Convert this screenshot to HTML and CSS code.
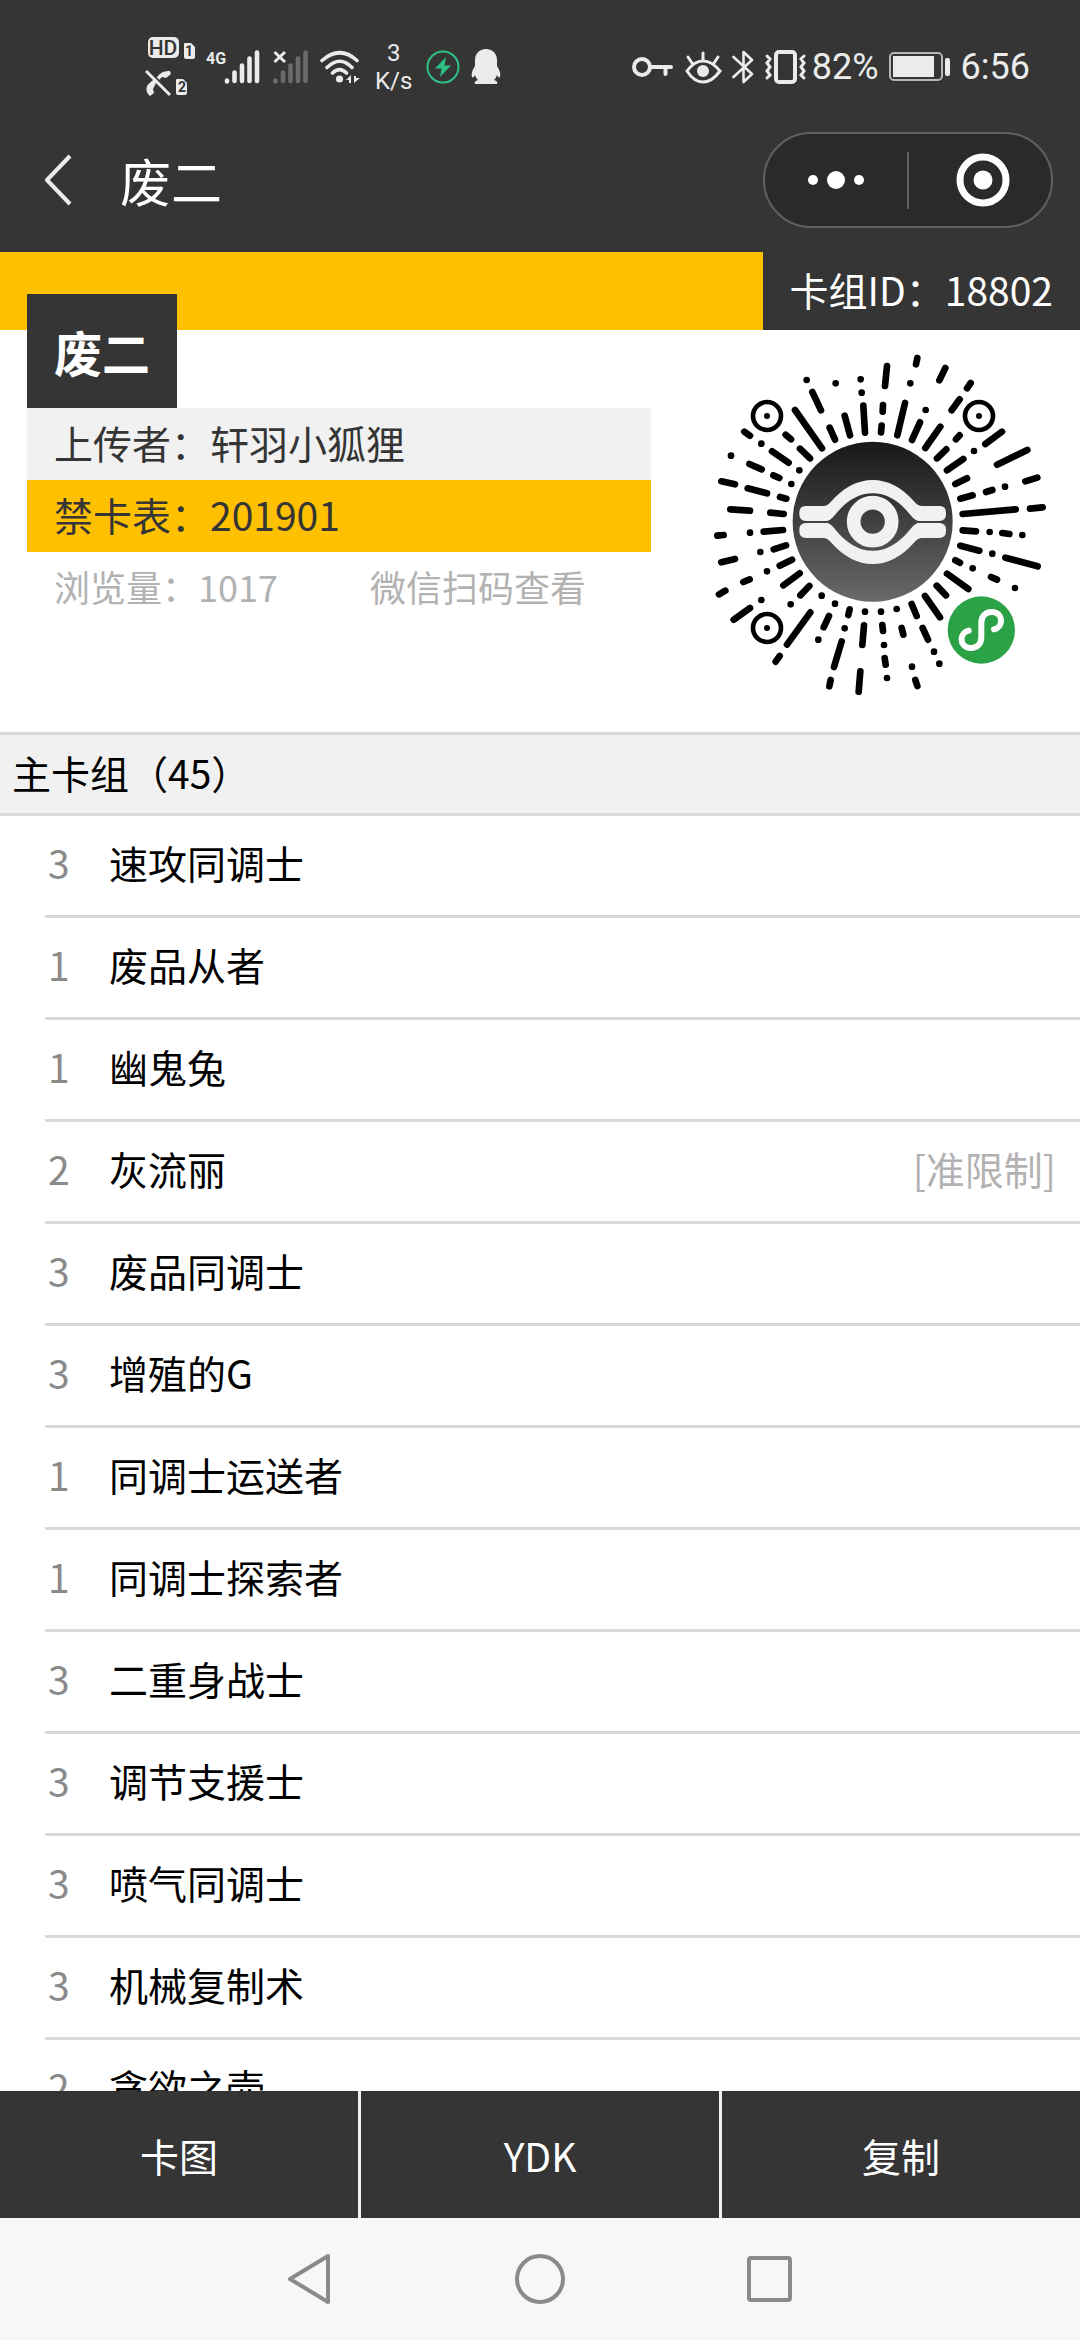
FILE: index.html
```html
<!DOCTYPE html>
<html lang="zh-CN">
<head>
    <meta charset="UTF-8">
    <meta name="viewport" content="width=device-width, initial-scale=1.0">
    <link rel="stylesheet" href="styles.css">
    <title>废二</title>
</head>
<body>
    <header class="top">
      <div class="status">
        <div class="status-left">
          <svg class="sims" width="50" height="62" viewBox="0 0 50 62">
            <rect x="3" y="1" width="31" height="21" rx="5" fill="#ebebeb"/>
            <text x="18" y="19" class="hd">HD</text>
            <path d="M39 8q0-1 1-1h6l4 4v10q0 2-2 2h-7q-2 0-2-2z" fill="#ebebeb"/>
            <text x="44" y="20" class="sim">1</text>
            <path d="M31 44q0-1 1-1h6l4 4v10q0 2-2 2h-7q-2 0-2-2z" fill="#ebebeb"/>
            <text x="37" y="56" class="sim">2</text>
            <path d="M12 41Q17 34 25 35L26 38L21 42L17 41L11 47L8 53L9 57L5 60Q0 56 2 50Q5 46 12 41Z" fill="#ebebeb"/>
            <path d="M3 34L27 58" stroke="#353535" stroke-width="2"/>
            <path d="M1 35L25 59" stroke="#ebebeb" stroke-width="3"/>
          </svg>
          <svg class="signal" width="56" height="38" viewBox="0 0 56 38">
            <text x="0" y="16" class="net">4G</text>
            <path d="M21 33.500V32.500M28.500 33V24.500M36 33V17.500M43.500 33V10.500M51 33V4.500" stroke="#ebebeb" stroke-width="4.600" stroke-linecap="round"/>
          </svg>
          <svg class="no-signal" width="36" height="38" viewBox="0 0 36 38">
            <path d="M1.500 4L12 14M12 4L1.500 14" stroke="#ebebeb" stroke-width="3"/>
            <path d="M2.500 33.500V32.500M10 33V24.500M17.500 33V17.500M25 33V10.500M32.500 33V4.500" stroke="#6b6b6b" stroke-width="4.600" stroke-linecap="round"/>
          </svg>
          <svg class="wifi" width="41" height="38" viewBox="0 0 41 38" fill="none" stroke="#ebebeb" stroke-width="3.600" stroke-linecap="round">
            <path d="M2 12.500Q20 -3 37 12.500M7 19.500Q20 7 32 19.500M12.500 25Q19.500 18 26.500 25"/>
            <circle cx="19.500" cy="31" r="3.600" fill="#ebebeb" stroke="none"/>
            <path d="M31 27V35H29V32H26ZM34 35V28H36V30H40Z" fill="#ebebeb" stroke="none"/>
          </svg>
          <p class="speed">3<br>K/s</p>
          <svg class="bolt" width="34" height="34" viewBox="0 0 34 34">
            <circle cx="17" cy="17" r="15.500" fill="none" stroke="#2fc184" stroke-width="2"/>
            <path d="M20 7L9 18.500H15.500L14 27L25 15.500H18.500Z" fill="#2fc184"/>
          </svg>
          <svg class="penguin" width="30" height="36" viewBox="0 0 30 36">
            <path d="M15 0C22 0 26 5 26 11L26 17C28 20 30 24 29 28C28 29 27 28 26 26C25 29 24 30 23 31C26 32 27 33 26 35H4C3 33 4 32 7 31C6 30 5 29 4 26C3 28 2 29 1 28C0 24 2 20 4 17L4 11C4 5 8 0 15 0Z" fill="#ebebeb"/>
          </svg>
        </div>
        <div class="status-right">
          <svg width="42" height="20" viewBox="0 0 42 20" fill="none" stroke="#ebebeb" stroke-width="4">
            <circle cx="10" cy="10" r="8"/>
            <path d="M18 10H39M33.500 10V17" stroke-linecap="round"/>
          </svg>
          <svg width="38" height="34" viewBox="0 0 38 34" fill="none" stroke="#ebebeb" stroke-width="3" stroke-linecap="round">
            <path d="M3 21Q10 11 19 11T36 21Q28 32 19 32T3 21ZM19 10V3M8 13L4 7M30 13L34 7"/>
            <circle cx="19" cy="21" r="6" fill="#ebebeb" stroke="none"/>
          </svg>
          <svg width="22" height="36" viewBox="0 0 22 36" fill="none" stroke="#ebebeb" stroke-width="2.600" stroke-linejoin="round" stroke-linecap="round">
            <path d="M1.500 8L20 25L11.500 33V3L20 11L1.500 28"/>
          </svg>
          <svg class="vibrate" width="44" height="34" viewBox="0 0 44 34" fill="none" stroke="#ebebeb" stroke-width="3" stroke-linecap="round">
            <rect x="12" y="2" width="19" height="30" rx="3" stroke-width="4"/>
            <path d="M3 6L6 9L3 13L6 17L3 21L6 25L3 28M40 6L37 9L40 13L37 17L40 21L37 25L40 28"/>
          </svg>
          <span class="percent">82%</span>
          <svg width="62" height="30" viewBox="0 0 62 30">
            <rect x="1" y="1" width="52" height="27" rx="4" fill="none" stroke="#b4b8b6" stroke-width="2"/>
            <rect x="4" y="4" width="41" height="21" fill="#ebebeb"/>
            <rect x="56" y="6" width="5" height="18" rx="2" fill="#ebebeb"/>
          </svg>
          <span class="clock">6:56</span>
        </div>
      </div>

      <div class="nav">
        <button class="back" type="button" aria-label="返回">
          <svg width="30" height="54" viewBox="0 0 30 54" fill="none" stroke="#ebebeb" stroke-width="4" stroke-linejoin="round">
            <path d="M25 3L2 27L25 51"/>
          </svg>
        </button>
        <h1>废二</h1>
        <div class="capsule">
          <button type="button" aria-label="更多">
            <svg width="58" height="20" viewBox="0 0 58 20" fill="#fff">
              <circle cx="6" cy="10" r="5"/>
              <circle cx="29" cy="10" r="9"/>
              <circle cx="52" cy="10" r="5"/>
            </svg>
          </button>
          <button type="button" aria-label="关闭">
            <svg width="54" height="54" viewBox="0 0 54 54">
              <circle cx="27" cy="27" r="23" fill="none" stroke="#fff" stroke-width="7"/>
              <circle cx="27" cy="27" r="9.500" fill="#fff"/>
            </svg>
          </button>
        </div>
      </div>
    </header>

    <main class="content">
      <div class="banner">
        <p class="deck-id">卡组ID：18802</p>
      </div>

      <section class="info">
        <div class="detail">
          <h2>废二</h2>
          <p class="uploader">上传者：轩羽小狐狸</p>
          <p class="banlist">禁卡表：201901</p>
          <p class="views"><span>浏览量：1017</span><span>微信扫码查看</span></p>
        </div>
        <svg class="qrcode" width="360" height="370" viewBox="0 0 1080 1110" role="img" aria-label="小程序码">
          <defs>
            <linearGradient id="disc" x1="0" y1="0" x2="0" y2="1">
              <stop offset="0" stop-color="#181818"/>
              <stop offset="1" stop-color="#696969"/>
            </linearGradient>
          </defs>
          <!-- rays, a zero length segment draws a dot -->
          <g fill="none" stroke="#000" stroke-width="20" stroke-linecap="round">
            <path d="M561 78L555 138M652 54L648 73M631 130h0M736 84L718 121M812 129L801 145M779 178L755 211M677 210h0M615 189L592 286M660 247L636 300M721 260L676 324M779 286L768 298M739 328L711 355M790 357L741 391M822 333h0M906 275L856 312M982 330L891 374"/>
            <path d="M1012 413L976 424M915 440h0M877 450L858 456M801 415L766 432M818 466L781 476M947 508L788 522M990 506L1028 502M788 571L828 574M869 576h0M907 579L928 582M967 585h0M781 617L838 632M877 641h0M916 653L1013 679M766 661L780 668M818 685h0M873 711L891 719M945 744h0"/>
            <path d="M741 701L805 747M710 737L738 766M675 768L720 832M635 792L650 828M668 864L684 899M702 935h0M718 971h0M605 864L610 884M590 807h0M543 815h0M547 855L549 873M552 915h0M554 954L557 974M561 1014h0M636 980h0M646 1020L652 1038"/>
            <path d="M495 815h0M492 856L487 915M481 994L476 1055M449 808L445 825M434 865h0M425 904L402 981M392 1020L388 1039M405 791h0M387 828L371 862M355 899h0M365 767h0M331 817L261 914M239 948L227 965M328 738L301 766M272 793h0M299 700L250 736M184 780h0M150 804L101 839"/>
            <path d="M276 659L239 677M201 694h0M149 718L130 726M76 752L57 763M258 616L221 628M181 636h0M105 657L64 667M249 570L191 575M150 578h0M71 585L52 587M251 522L211 518M150 512L91 508M259 476L240 471M201 460L143 445M105 433L64 424"/>
            <path d="M274 432h0M238 414L220 406M185 388L148 372M93 347h0M298 391h0M266 368L216 334M330 355L300 326M184 311h0M150 287L133 275M273 298L257 284M366 325L285 210M405 299L389 263M363 211L337 156M320 120h0M407 130h0M450 286L434 227M495 278L490 197M485 158h0M482 118h0M549 195L548 215M545 257L543 277"/>
          </g>
          <g fill="none" stroke="#000" stroke-width="14">
            <circle cx="201" cy="228" r="42"/>
            <circle cx="837" cy="228" r="42"/>
            <circle cx="201" cy="864" r="42"/>
          </g>
          <circle cx="201" cy="228" r="9"/>
          <circle cx="837" cy="228" r="9"/>
          <circle cx="201" cy="864" r="9"/>
          <circle cx="518" cy="545" r="240" fill="url(#disc)"/>
          <g fill="#f1f1f1">
            <path id="lid" d="M318 498H370Q382 498 392 486Q450 420 518 420T644 486Q654 498 666 498H718Q738 498 738 518V523Q738 543 718 543H656Q646 543 632 526Q580 460 518 460T404 526Q390 543 380 543H318Q298 543 298 523V518Q298 498 318 498Z"/>
            <use href="#lid" transform="translate(0 1092) scale(1 -1)"/>
          </g>
          <circle cx="518" cy="545" r="57" fill="none" stroke="#f1f1f1" stroke-width="41"/>
          <circle cx="844" cy="870" r="101" fill="#2ba245"/>
          <path d="M882 868C910 862 912 820 878 816C858 814 844 828 844 848V892C844 912 830 926 810 924C776 920 778 878 806 872" fill="none" stroke="#fff" stroke-width="18" stroke-linecap="round"/>
        </svg>
      </section>

      <h3 class="group">主卡组（45）</h3>
      <ul class="cards">
        <li><span class="count">3</span><span class="name">速攻同调士</span></li>
        <li><span class="count">1</span><span class="name">废品从者</span></li>
        <li><span class="count">1</span><span class="name">幽鬼兔</span></li>
        <li><span class="count">2</span><span class="name">灰流丽</span><span class="limit">[准限制]</span></li>
        <li><span class="count">3</span><span class="name">废品同调士</span></li>
        <li><span class="count">3</span><span class="name">增殖的G</span></li>
        <li><span class="count">1</span><span class="name">同调士运送者</span></li>
        <li><span class="count">1</span><span class="name">同调士探索者</span></li>
        <li><span class="count">3</span><span class="name">二重身战士</span></li>
        <li><span class="count">3</span><span class="name">调节支援士</span></li>
        <li><span class="count">3</span><span class="name">喷气同调士</span></li>
        <li><span class="count">3</span><span class="name">机械复制术</span></li>
        <li><span class="count">2</span><span class="name">贪欲之壶</span></li>
      </ul>
    </main>

    <div class="actions">
      <button type="button">卡图</button>
      <button type="button">YDK</button>
      <button type="button">复制</button>
    </div>

    <nav class="system">
      <button type="button" aria-label="后退">
        <svg width="50" height="54" viewBox="0 0 50 54">
          <path d="M43 4V50L5 27Z"/>
        </svg>
      </button>
      <button type="button" aria-label="主屏幕">
        <svg width="54" height="54" viewBox="0 0 54 54">
          <circle cx="27" cy="27" r="23"/>
        </svg>
      </button>
      <button type="button" aria-label="最近任务">
        <svg width="50" height="54" viewBox="0 0 50 54">
          <rect x="4" y="6" width="41" height="42" rx="2"/>
        </svg>
      </button>
    </nav>
</body>
</html>
```
FILE: styles.css
```css
*, *:before, *:after {
  margin: 0;
  padding: 0;
  box-sizing: border-box;
}
body {
  display: flex;
  flex-direction: column;
  height: 100vh;
  background: #fff;
  color: #000;
  font-family: "Noto Sans CJK SC", sans-serif;
  font-size: 39px;
}
button {
  border: 0;
  background: none;
  color: inherit;
  font: inherit;
  cursor: pointer;
}
svg {
  display: block;
  flex: none;
}

/* status bar */
.top {
  flex: none;
  background: #353535;
  color: #fff;
}
.status {
  display: flex;
  justify-content: space-between;
  align-items: center;
  height: 108px;
  padding: 26px 50px 0 145px;
  color: #ebebeb;
  font-family: Roboto, sans-serif;
}
.status-left, .status-right {
  display: flex;
  align-items: center;
}
.status-left {
  gap: 11px;
}
.status-right {
  gap: 10px;
}
.hd, .sim {
  fill: #353535;
  font-weight: 500;
  text-anchor: middle;
}
.hd {
  font-size: 21px;
}
.sim {
  font-size: 14px;
  font-weight: 700;
}
.net {
  fill: #ebebeb;
  font-size: 16px;
  font-weight: 700;
}
.speed {
  padding: 0 3px;
  font-size: 24px;
  line-height: 28px;
  text-align: center;
}
.vibrate {
  margin-right: -6px;
}
.percent, .clock {
  font-size: 36px;
}

/* title bar */
.nav {
  display: flex;
  align-items: center;
  height: 144px;
  padding: 0 27px 0 45px;
}
.nav h1 {
  flex: 1;
  padding-left: 45px;
  font-size: 51px;
  font-weight: 400;
}
.capsule {
  display: flex;
  align-items: center;
  width: 290px;
  height: 96px;
  border: 2px solid #616161;
  border-radius: 48px;
  background: #2a2a2a;
}
.capsule button {
  display: flex;
  flex: 1 1 0;
  justify-content: center;
  align-items: center;
  height: 57px;
}
.capsule button + button {
  border-left: 2px solid #616161;
}
.capsule button + button svg {
  margin-left: 5px;
}

/* deck info */
.content {
  flex: 1;
  min-height: 0;
  overflow: hidden;
}
.banner {
  display: flex;
  justify-content: flex-end;
  background: #ffc000;
}
.deck-id {
  padding: 0 27px 4px;
  background: #353535;
  color: #fff;
  line-height: 74px;
}
.info {
  display: flex;
  justify-content: space-between;
  align-items: flex-start;
  padding: 0 20px 22px 27px;
}
.detail {
  flex: 1;
  max-width: 624px;
  margin-top: -36px;
  color: #353535;
  line-height: 68px;
}
.detail h2 {
  width: fit-content;
  padding: 0 27px;
  background: #353535;
  color: #fff;
  font-size: 48px;
  line-height: 114px;
}
.detail p {
  padding: 0 27px 4px;
}
.uploader {
  background: #f1f1f1;
}
.banlist {
  background: #ffc000;
}
.views {
  display: flex;
  gap: 92px;
  color: #b2b2b2;
  font-size: 36px;
}
.qrcode {
  margin-top: 10px;
}

/* card list */
.group {
  padding: 0 12px 4px;
  border-top: 3px solid #d9d9d9;
  border-bottom: 3px solid #d9d9d9;
  background: #f1f1f1;
  font-size: 39px;
  font-weight: 400;
  line-height: 74px;
}
.cards {
  padding-left: 45px;
  list-style: none;
}
.cards li {
  display: flex;
  padding: 0 24px 6px 0;
  border-bottom: 3px solid #d9d9d9;
  line-height: 93px;
}
.count {
  width: 64px;
  padding-left: 3px;
  color: #8a8a8a;
}
.name {
  flex: 1;
}
.limit {
  color: #b2b2b2;
}

/* bottom buttons */
.actions {
  display: flex;
  flex: none;
  height: 127px;
  background: #353535;
  color: #fff;
}
.actions button {
  flex: 1 1 0;
}
.actions button:first-child {
  border-right: 3px solid #f1f1f1;
}
.actions button:last-child {
  border-left: 3px solid #f1f1f1;
}
.system {
  display: flex;
  flex: none;
  justify-content: center;
  align-items: center;
  gap: 178px;
  height: 122px;
  background: #f7f7f7;
}
.system svg {
  fill: none;
  stroke: #8a8a8a;
  stroke-width: 4;
  stroke-linejoin: round;
}
```
